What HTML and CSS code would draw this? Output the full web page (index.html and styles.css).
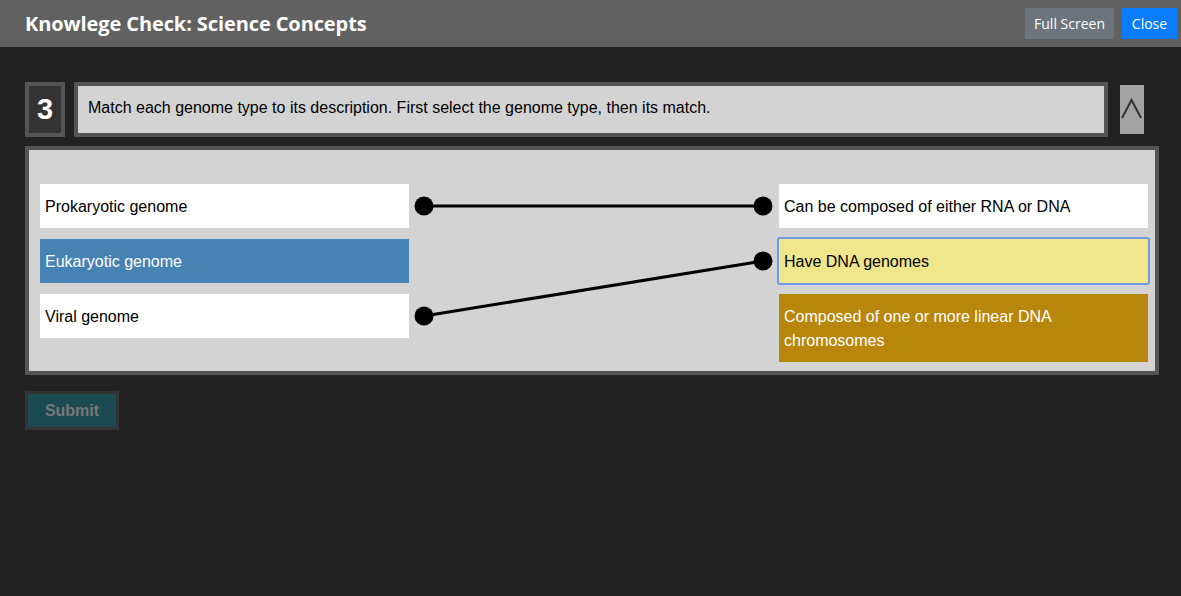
FILE: index.html
```html
<!DOCTYPE html>
<html>
<head>
<meta charset="utf-8">
<link rel="stylesheet" href="styles.css">
</head>
<body>
<header class="topbar">
  <h1 class="title">Knowlege Check: Science Concepts</h1>
  <div class="top-actions">
    <button class="btn btn-gray">Full Screen</button>
    <button class="btn btn-blue">Close</button>
  </div>
</header>
<main class="content">
  <div class="question-row">
    <div class="qnum">3</div>
    <div class="qtext">Match each genome type to its description. First select the genome type, then its match.</div>
    <button class="collapse" aria-label="collapse">
      <svg width="23" height="48" viewBox="0 0 23 48"><polyline points="2,33 11.5,15 21,33" fill="none" stroke="#333" stroke-width="2"/></svg>
    </button>
  </div>
  <div class="panel">
    <div class="match">
      <div class="col left">
        <div class="item">Prokaryotic genome</div>
        <div class="item selected">Eukaryotic genome</div>
        <div class="item">Viral genome</div>
      </div>
      <div class="col right">
        <div class="item">Can be composed of either RNA or DNA</div>
        <div class="item focus">Have DNA genomes</div>
        <div class="item gold">Composed of one or more linear DNA chromosomes</div>
      </div>
      <svg class="links" width="1125" height="225" viewBox="0 0 1125 225">
        <g stroke="#000" stroke-width="3">
          <line x1="395" y1="56" x2="734" y2="56"/>
          <line x1="395" y1="166" x2="734" y2="111"/>
        </g>
        <g fill="#000">
          <circle cx="395" cy="56" r="9.5"/>
          <circle cx="734" cy="56" r="9.5"/>
          <circle cx="734" cy="111" r="9.5"/>
          <circle cx="395" cy="166" r="9.5"/>
        </g>
      </svg>
    </div>
  </div>
  <button class="submit">Submit</button>
</main>
</body>
</html>
```
FILE: styles.css
```css
* { box-sizing: border-box; }
html, body { margin: 0; padding: 0; }
body {
  background: #222222;
  width: 1181px;
  height: 596px;
  overflow: hidden;
  font-family: "Liberation Sans", Arial, sans-serif;
}
.topbar {
  height: 47px;
  background: #616161;
  display: flex;
  align-items: center;
  justify-content: space-between;
  padding: 0 4px 0 25px;
}
.title {
  margin: 0;
  color: #fff;
  font-family: "Open Sans", "DejaVu Sans", sans-serif;
  font-weight: 700;
  font-size: 20px;
  letter-spacing: -0.1px;
}
.top-actions { display: flex; gap: 8px; align-self: flex-start; margin-top: 8px; }
.btn {
  border: 0;
  height: 31px;
  color: #fff;
  font-family: "Open Sans", "DejaVu Sans", sans-serif;
  font-size: 14px;
  padding: 0 9px;
  border-radius: 0;
}
.btn-gray { background: #6d747b; width: 89px; }
.btn-blue { background: #0a7cff; width: 55px; }
.content { padding: 35px 23px 0 25px; }
.question-row { display: flex; align-items: flex-start; height: 55px; }
.qnum {
  width: 40px;
  height: 55px;
  border: 4px solid #555;
  background: #333;
  color: #fff;
  font-weight: 700;
  font-size: 29px;
  display: flex;
  align-items: center;
  justify-content: center;
}
.qtext {
  margin-left: 9px;
  width: 1034px;
  height: 55px;
  border: 4px solid #555;
  background: #d3d3d3;
  font-size: 16px;
  color: #000;
  padding: 13px 10px;
  line-height: 18px;
}
.collapse {
  margin: 3px 0 0 12px;
  width: 24px;
  height: 49px;
  background: #a3a3a3;
  border: 0;
  padding: 0;
  display: flex;
}
.panel {
  margin-top: 9px;
  width: 1134px;
  border: 4px solid #555;
  background: #d3d3d3;
  padding: 34px 7px 9px 11px;
}
.match {
  position: relative;
  display: flex;
  justify-content: space-between;
}
.col { display: flex; flex-direction: column; gap: 11px; width: 369px; position: relative; z-index: 1; }
.item {
  background: #fff;
  color: #000;
  font-size: 16px;
  line-height: 24px;
  padding: 11px 5px 9px;
}
.item.selected { background: #4682b4; color: #fff; }
.item.focus { background: #f0e68c; outline: 2px solid #6f9be6; outline-offset: 0; border-radius: 1px; }
.item.gold { background: #b8860b; color: #fff; }
.links { position: absolute; left: 0; top: 0; width: 1125px; height: 225px; margin-left: -11px; margin-top: -34px; }
.submit {
  margin-top: 16px;
  width: 94px;
  height: 39px;
  background: #1c4a52;
  border: 3px solid #333;
  color: #787878;
  font-weight: 700;
  font-size: 16px;
  font-family: "Liberation Sans", Arial, sans-serif;
}
```
